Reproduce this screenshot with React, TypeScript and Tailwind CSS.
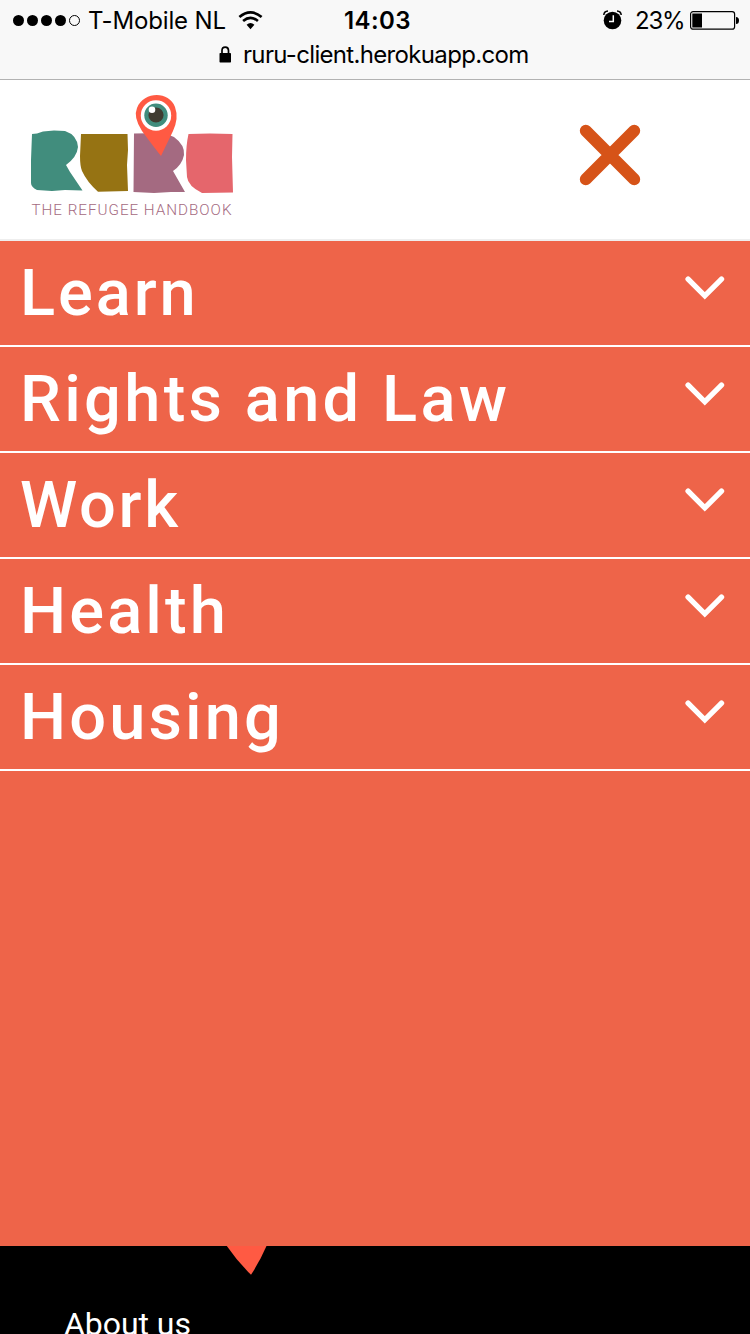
import React from "react";

const sections = [
  { label: "Learn", tracking: "tracking-[2.9px]" },
  { label: "Rights and Law", tracking: "tracking-[3.3px]" },
  { label: "Work", tracking: "tracking-[2.7px]" },
  { label: "Health", tracking: "tracking-[3.1px]" },
  { label: "Housing", tracking: "tracking-[3.1px]" },
];

function StatusBar() {
  return (
    <div className="h-20 shrink-0 border-b border-[#b2b2b2] bg-[#f8f8f8] font-['Inter',sans-serif] text-2xl text-black">
      <div className="grid h-10 grid-cols-[344px_1fr_147px] items-center whitespace-nowrap">
        <div className="flex items-center pl-[13px]">
          <svg className="h-5 w-[68px]" viewBox="0 0 68 20">
            {[5.5, 19.5, 33.5, 47.5].map((x) => (
              <circle key={x} cx={x} cy="10.5" r="5.5" />
            ))}
            <circle cx="61.5" cy="10.5" r="5" fill="none" stroke="#000" />
          </svg>
          <span className="ml-[7px] w-[137px] pt-0.5 tracking-[-0.15px]">T-Mobile NL</span>
          <svg className="ml-[13px] h-5 w-[26px]" viewBox="0 0 26 20" fill="none" stroke="#000" strokeWidth="2.7">
            <path d="M1.4 7Q12.5 -2.2 23.6 7" />
            <path d="M5.1 11Q12.5 4.8 19.9 11" />
            <path d="M8.6 14.8Q12.5 11.2 16.4 14.8L12.5 19.2Z" fill="#000" stroke="none" />
          </svg>
        </div>
        <span className="pt-0.5 font-semibold tracking-[0.4px]">14:03</span>
        <div className="flex items-center">
          <svg className="h-5 w-5" viewBox="0 0 20 20">
            <circle cx="9.5" cy="10.5" r="8.8" />
            <path d="M.8 5Q1 1.2 5 1M14 1Q18 1.2 18.2 5" fill="none" stroke="#000" strokeWidth="1.5" />
            <path d="M10.3 5.2V11.4H6" fill="none" stroke="#fff" strokeWidth="1.5" />
          </svg>
          <span className="ml-3 w-[50px] pt-0.5 tracking-[-1.2px]">23%</span>
          <svg className="ml-[5px] h-5 w-[50px]" viewBox="0 0 50 20">
            <rect x=".6" y="1.6" width="44" height="17.6" rx="2.5" fill="none" stroke="#000" strokeWidth="1.2" />
            <path d="M2.3 3.5H12V17.5H2.3ZM46 7Q49 7 49 10.5T46 14Z" />
          </svg>
        </div>
      </div>
      <div className="flex h-[30px] items-center pl-[219px]">
        <svg className="h-5 w-3" viewBox="0 0 12 20">
          <rect x=".5" y="8" width="11.5" height="9.5" rx=".7" />
          <path d="M3 9V5.5C3 1 9.5 1 9.5 5.5V9" fill="none" stroke="#000" strokeWidth="1.7" />
        </svg>
        <span className="ml-3 whitespace-nowrap tracking-[-0.67px]">ruru-client.herokuapp.com</span>
      </div>
    </div>
  );
}

function Logo() {
  return (
    <svg className="h-[140px] w-60" viewBox="0 80 240 140" aria-label="RURU The Refugee Handbook">
      <path fill="#418d7d" d="M32 134L37 133.5L43 131.5L54 130.5L65 131Q77 135 78 147Q77 157 66 165L70 172L82.5 190.5L65 190L52 191L37 190Q31 187 31 183L31 160Z" />
      <path fill="#967313" d="M81 134H127.5L128 150L127 165L128 191L98 191.7Q87 182 82 171Q80 166 80 156Z" />
      <path fill="#a46a81" d="M134 133.5L164 133L174 137Q185 145 184 155Q182 165 173 171L185 192L171 192L154 193L133.5 192Z" />
      <path fill="#e5666c" d="M188.5 134L210 133.5L232.5 134L232 157L233 192.5L202 193Q188 186 187 177L186 160Q186 145 188.5 134Z" />
      <path fill="#ff5a43" d="M161 156Q153 146 142 131Q133 117 137 108C144 91 169 91 175 107Q179 118 173 131Z" />
      <circle cx="156" cy="115.5" r="15.2" fill="#fff" />
      <circle cx="156" cy="115.2" r="11.7" fill="#418d7d" />
      <circle cx="156" cy="115" r="7.6" fill="#403c31" />
      <circle cx="152" cy="109.7" r="3.3" fill="#fff" />
      <text x="31.5" y="214.8" textLength="201" lengthAdjust="spacingAndGlyphs" fill="#a46a81" className="font-['Roboto',sans-serif] text-[14px] font-light tracking-[0.9px]">
        THE REFUGEE HANDBOOK
      </text>
    </svg>
  );
}

function MenuItem({ label, tracking }: { label: string; tracking: string }) {
  return (
    <li className="flex h-[106px] justify-between border-b-2 border-white pr-[25px] pl-5">
      <span className={`pt-[10px] text-[65px] leading-[84px] font-medium whitespace-nowrap ${tracking}`}>{label}</span>
      <svg className="mt-[35px] h-6 w-10" viewBox="0 0 40 24" fill="none" stroke="#fff" strokeWidth="5.4">
        <path d="M3.1 3.1L19.8 19.8L36.5 3.1" strokeLinecap="round" />
      </svg>
    </li>
  );
}

export default function App() {
  return (
    <div className="flex h-[1334px] w-[750px] flex-col overflow-hidden bg-white font-['Roboto',sans-serif]">
      <StatusBar />
      <header className="flex h-[161px] shrink-0 items-start justify-between border-b-2 border-[#eee] pr-[109px]">
        <Logo />
        <svg className="mt-[44px] h-[62px] w-[62px]" viewBox="0 0 62 62" stroke="#d65318" strokeWidth="12" strokeLinecap="round">
          <path d="M6.8 6.8L55.2 55.2M55.2 6.8L6.8 55.2" />
        </svg>
      </header>
      <nav className="h-[1005px] shrink-0 bg-[#ee6449] text-white">
        <ul>
          {sections.map((section) => (
            <MenuItem key={section.label} {...section} />
          ))}
        </ul>
      </nav>
      <footer className="h-[88px] shrink-0 bg-black text-white">
        <svg className="ml-[226px] h-[29px] w-[42px]" viewBox="0 0 42 29">
          <path fill="#ff5a43" d="M.8 0H40.5Q34 15 25 28.8Q11 15 .8 0Z" />
        </svg>
        <p className="mt-[30px] ml-16 text-[32px] leading-[38px] tracking-[-0.05px]">About us</p>
      </footer>
    </div>
  );
}
